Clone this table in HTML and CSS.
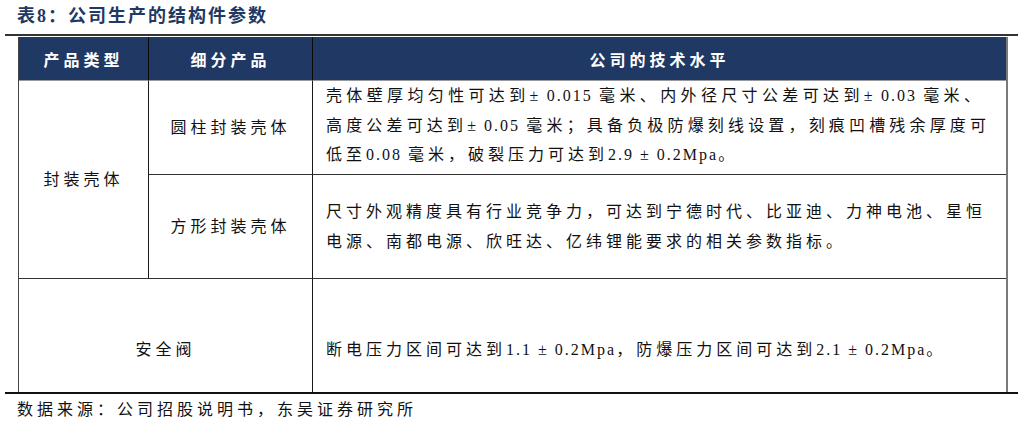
FILE: index.html
```html
<!DOCTYPE html>
<html lang="zh-CN">
<head>
<meta charset="utf-8">
<title>表8：公司生产的结构件参数</title>
<link rel="stylesheet" href="styles.css">
</head>
<body>
<div class="page">
  <div class="title">表8：公司生产的结构件参数</div>
  <div class="rule rule-top"></div>
  <div class="table">
    <div class="th c1">产品类型</div>
    <div class="th c2">细分产品</div>
    <div class="th c3">公司的技术水平</div>

    <div class="td c1 span2 center">封装壳体</div>
    <div class="td c2 center r1">圆柱封装壳体</div>
    <div class="td c3 text r1 top">
      <div class="ln w1">壳体壁厚均匀性可达到<span class="n">± 0.015 </span>毫米、内外径尺寸公差可达到<span class="n">± 0.03 </span>毫米、</div>
      <div class="ln w2">高度公差可达到<span class="n">± 0.05 </span>毫米；具备负极防爆刻线设置，刻痕凹槽残余厚度可</div>
      <div class="ln">低至<span class="n">0.08 </span>毫米，破裂压力可达到<span class="n">2.9 ± 0.2Mpa</span>。</div>
    </div>

    <div class="td c2 center r2">方形封装壳体</div>
    <div class="td c3 text r2 mid">
      <div class="ln">尺寸外观精度具有行业竞争力，可达到宁德时代、比亚迪、力神电池、星恒</div>
      <div class="ln">电源、南都电源、欣旺达、亿纬锂能要求的相关参数指标。</div>
    </div>

    <div class="td c12 center r3 low">安全阀</div>
    <div class="td c3 text r3 low">断电压力区间可达到<span class="n">1.1 ± 0.2Mpa</span>，防爆压力区间可达到<span class="n">2.1 ± 0.2Mpa</span>。</div>
  </div>
  <div class="rule rule-bottom"></div>
  <div class="source">数据来源：公司招股说明书，东吴证券研究所</div>
</div>
</body>
</html>
```

FILE: styles.css
```css
html, body {
  margin: 0;
  padding: 0;
  background: #ffffff;
}

body {
  font-family: "Liberation Serif", "Noto Sans CJK SC", serif;
  color: #111111;
}

.page {
  width: 1024px;
  height: 424px;
  overflow: hidden;
}

.title {
  padding: 5px 0 0 17px;
  height: 24px;
  font-size: 18px;
  line-height: 23px;
  font-weight: 700;
  letter-spacing: 2px;
  color: #1f3864;
  white-space: nowrap;
}

.rule {
  margin-left: 5px;
  width: 1013px;
  height: 2px;
}

.rule-top {
  margin-top: 5px;
  background: #333333;
  margin-bottom: 1px;
}

.rule-bottom {
  background: #111111;
}

.table {
  margin-left: 18px;
  width: 990px;
  box-sizing: border-box;
  border-left: 1px solid #444444;
  border-right: 2px solid #7a7a7a;
  display: grid;
  grid-template-columns: 130px 164px 1fr;
  grid-template-rows: 44px 94px 104px 113px;
  font-size: 16px;
  letter-spacing: 4px;
}

.th {
  background: #1f3864;
  color: #ffffff;
  font-weight: 600;
  display: flex;
  align-items: center;
  justify-content: center;
  border-bottom: 1px solid #9a9a9a;
  box-sizing: border-box;
  white-space: nowrap;
}

.th.c1, .th.c2 {
  border-right: 1px solid #0a0a0a;
}

.td {
  box-sizing: border-box;
  border-bottom: 1px solid #333333;
  white-space: nowrap;
  line-height: 30px;
}

.c1, .c2, .c12 {
  border-right: 1px solid #1a1a1a;
}

.td.c1 {
  grid-column: 1;
}

.span2 {
  grid-row: 2 / span 2;
}

.td.c2 {
  grid-column: 2;
}

.td.c3 {
  grid-column: 3;
}

.c12 {
  grid-column: 1 / span 2;
}

.r3 {
  border-bottom: none;
}

.center {
  display: flex;
  align-items: center;
  justify-content: center;
}

.text {
  padding-left: 13px;
  display: flex;
  flex-direction: column;
  justify-content: center;
}

.text.top {
  display: block;
  padding-top: 0;
  line-height: 29.5px;
}

.ln {
  white-space: nowrap;
}

.w1,
.w2 {
  white-space: normal;
  text-align: justify;
  text-align-last: justify;
  text-justify: inter-character;
}

.w1 {
  width: 658px;
}

.w2 {
  width: 664px;
}

.text.low,
.center.low {
  display: block;
  padding-top: 56px;
}

.center.low {
  text-align: center;
}

.n {
  letter-spacing: 2px;
}

.source {
  padding: 4px 0 0 17px;
  font-size: 16px;
  line-height: 24px;
  letter-spacing: 4px;
  color: #111111;
  white-space: nowrap;
}
```
